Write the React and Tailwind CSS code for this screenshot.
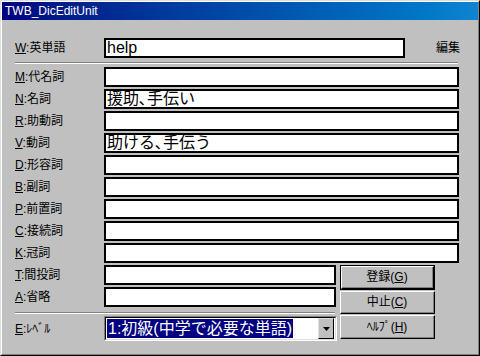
import React from 'react';

const font = "font-['Liberation_Sans','Noto_Sans_CJK_JP',sans-serif]";

const Label = ({ k, text }) => (
    <div className="w-[89px] shrink-0 text-[12px] leading-none text-black">
        <span className="underline">{k}</span>:{text}
    </div>
);

const Field = ({ value = '', w = 'w-[355px]' }) => (
    <div className={`${w} h-[20px] bg-white border-2 border-black flex items-center pl-[1px] text-[16px] leading-none text-black overflow-hidden whitespace-nowrap`}>
        {value}
    </div>
);

const Row = ({ k, text, value, w }) => (
    <div className="flex items-center h-[20px]">
        <Label k={k} text={text} />
        <Field value={value} w={w} />
    </div>
);

const Separator = ({ w }) => (
    <div className={`${w} h-[2px] border-t border-t-[#808080] border-b border-b-white`} />
);

const Button = ({ label, k, isDefault, h }) => (
    <div className={`${h} w-[95px] ${isDefault ? 'border border-black' : ''}`}>
        <div className="h-full w-full border-t border-l border-t-white border-l-white border-r border-b border-r-black border-b-black">
            <div className="h-full w-full border-r border-b border-r-[#808080] border-b-[#808080] flex items-center justify-center text-[12px] leading-none text-black">
                {label}(<span className="underline">{k}</span>)
            </div>
        </div>
    </div>
);

const rows = [
    { k: 'M', text: '代名詞' },
    { k: 'N', text: '名詞', value: '援助､手伝い' },
    { k: 'R', text: '助動詞' },
    { k: 'V', text: '動詞', value: '助ける､手伝う' },
    { k: 'D', text: '形容詞' },
    { k: 'B', text: '副詞' },
    { k: 'P', text: '前置詞' },
    { k: 'C', text: '接続詞' },
    { k: 'K', text: '冠詞' },
];

export default function App() {
    return (
        <div className={`w-[480px] h-[356px] ${font} border border-t-[#dfdfdf] border-l-[#dfdfdf] border-r-black border-b-black`}>
            <div className="h-full w-full bg-[#c0c0c0] border border-t-white border-l-white border-r-[#808080] border-b-[#808080] flex flex-col">
                {/* Title bar */}
                <div className="h-[18px] mx-0 bg-linear-to-r from-[#000080] to-[#1084d0] flex items-center pl-[3px] text-white text-[12px] leading-none">
                    TWB_DicEditUnit
                </div>

                {/* Body */}
                <div className="pl-[13px] pt-[18px] flex flex-col">
                    <div className="flex items-center h-[20px]">
                        <Label k="W" text="英単語" />
                        <Field value="help" w="w-[301px]" />
                        <div className="ml-[31px] text-[12px] leading-none text-black">編集</div>
                    </div>

                    <div className="mt-[4px]">
                        <Separator w="w-[443px]" />
                    </div>

                    <div className="mt-[3px] flex flex-col gap-[2px]">
                        {rows.map((r) => (
                            <Row key={r.k} {...r} />
                        ))}

                        <div className="flex">
                            <div className="w-[322px] flex flex-col">
                                <Row k="T" text="間投詞" w="w-[232px]" />
                                <div className="mt-[2px]">
                                    <Row k="A" text="省略" w="w-[232px]" />
                                </div>
                                <div className="mt-[5px]">
                                    <Separator w="w-[320px]" />
                                </div>
                                <div className="mt-[2px] flex items-center h-[25px]">
                                    <Label k="E" text="ﾚﾍﾞﾙ" />
                                    <div className="w-[233px] h-[25px] border-t border-l border-t-[#808080] border-l-[#808080] border-r border-b border-r-white border-b-white">
                                        <div className="h-full w-full border-t border-l border-t-black border-l-black border-r border-b border-r-[#dfdfdf] border-b-[#dfdfdf] bg-white flex items-center pl-[1px]">
                                            <div className="h-[19px] bg-[#000080] text-white text-[16px] leading-none flex items-center px-[1px] whitespace-nowrap">
                                                1:初級(中学で必要な単語)
                                            </div>
                                            <div className="ml-auto mr-[1px] h-[21px] w-[16px] bg-[#c0c0c0] border-t border-l border-t-[#dfdfdf] border-l-[#dfdfdf] border-r border-b border-r-black border-b-black flex items-center justify-center">
                                                <svg width="7" height="4" viewBox="0 0 7 4">
                                                    <path d="M0 0h7L3.5 4z" fill="black" />
                                                </svg>
                                            </div>
                                        </div>
                                    </div>
                                </div>
                            </div>

                            <div className="ml-[3px] flex flex-col gap-[1px]">
                                <Button label="登録" k="G" isDefault h="h-[25px]" />
                                <Button label="中止" k="C" h="h-[23px]" />
                                <Button label="ﾍﾙﾌﾟ" k="H" h="h-[24px]" />
                            </div>
                        </div>
                    </div>
                </div>
            </div>
        </div>
    );
}
